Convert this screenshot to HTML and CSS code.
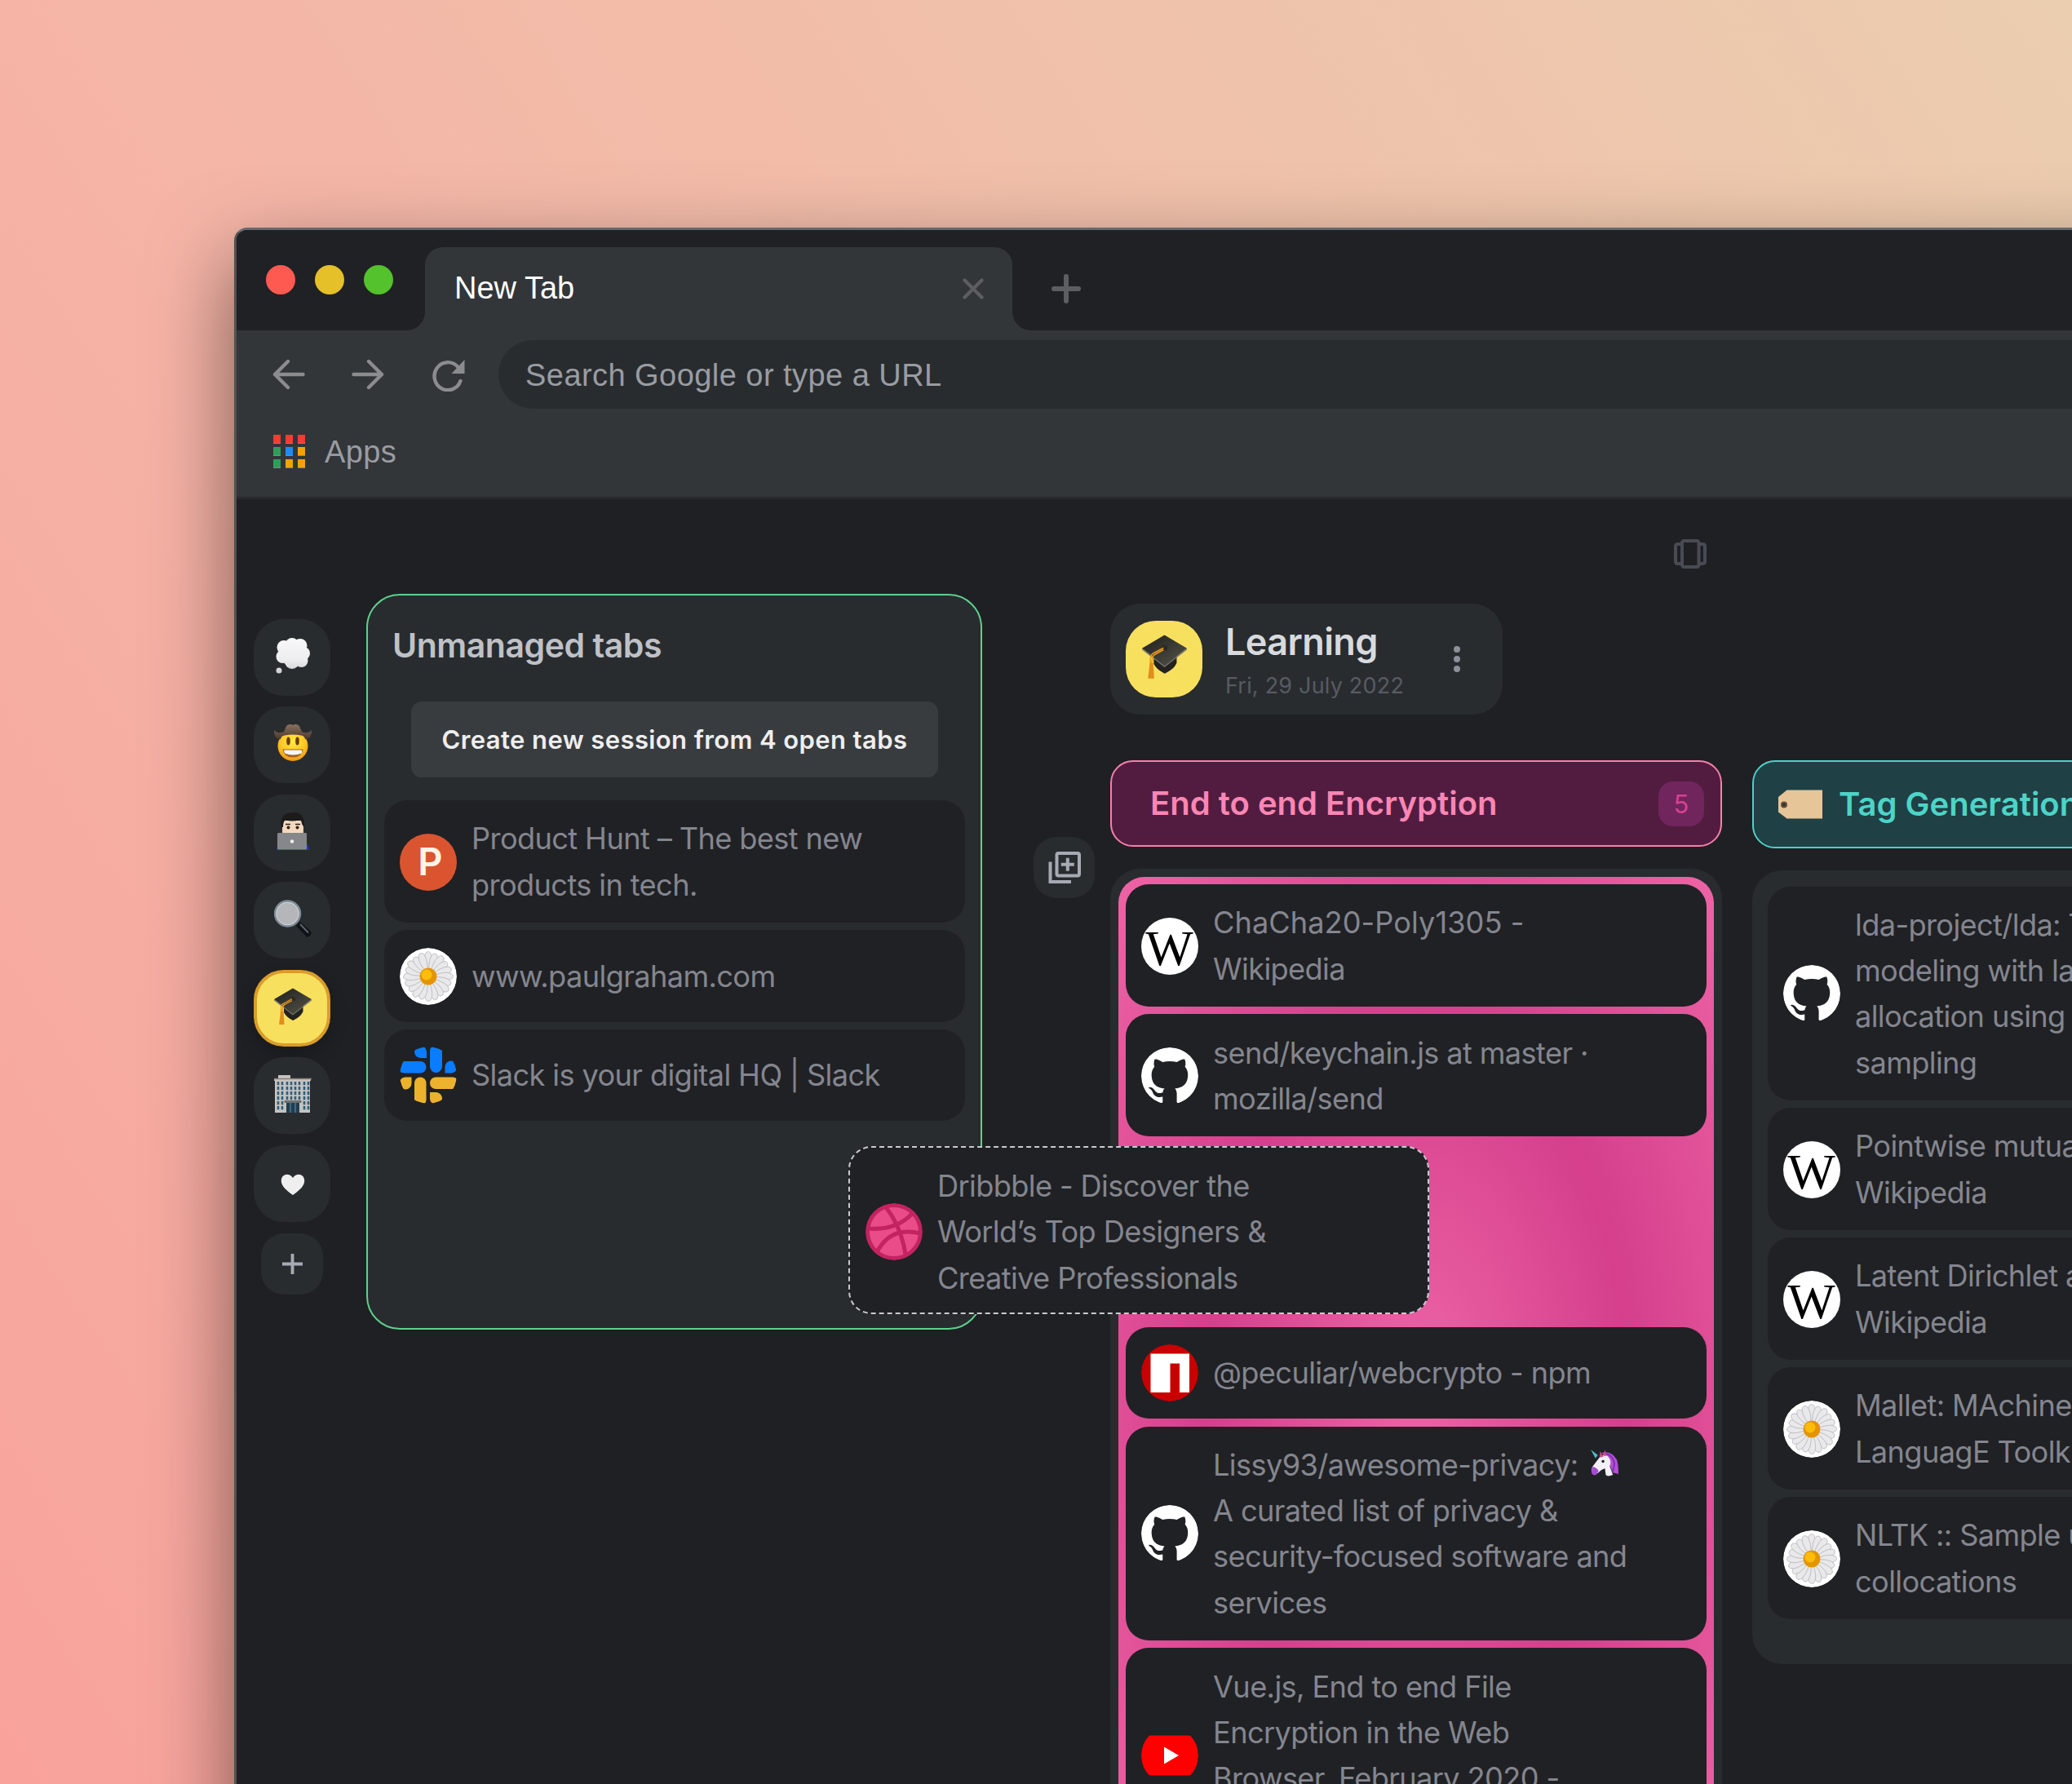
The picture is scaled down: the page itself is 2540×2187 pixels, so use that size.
FILE: index.html
```html
<!DOCTYPE html>
<html lang="en">
<head>
<meta charset="utf-8">
<title>New Tab</title>
<link rel="stylesheet" href="styles.css">
</head>
<body>
<svg class="defs" width="0" height="0" aria-hidden="true">
  <defs>
    <radialGradient id="face" cx=".5" cy=".35" r=".7"><stop offset="0" stop-color="#ffec3f"/><stop offset=".6" stop-color="#fdc524"/><stop offset="1" stop-color="#ee8a12"/></radialGradient>
    <linearGradient id="hat" x1="0" y1="0" x2="0" y2="1"><stop offset="0" stop-color="#8a7160"/><stop offset="1" stop-color="#4a382c"/></linearGradient>
    <linearGradient id="puff" gradientUnits="userSpaceOnUse" x1="0" y1="0" x2="0" y2="46"><stop offset="0" stop-color="#f8f8f9"/><stop offset=".6" stop-color="#eeeef0"/><stop offset="1" stop-color="#c9cbce"/></linearGradient>
    <linearGradient id="board" x1="0" y1="0" x2="1" y2="1"><stop offset="0" stop-color="#1f1f1c"/><stop offset="1" stop-color="#55544b"/></linearGradient>
    <symbol id="cap" viewBox="0 0 46 46">
      <path d="M12 22v8c3 6 8 8 11 10 4-2 10-5 12.500-11v-8z" fill="#23221f"/>
      <path d="M23 .5 46 14 23 32 0 14z" fill="url(#board)"/>
      <path d="M0 14 23 32 46 14v1.500L23 33.500 0 15.500z" fill="#77766c"/>
      <ellipse cx="23" cy="13.500" rx="3.200" ry="2.600" fill="#2a2925"/>
      <path d="M22 13.500 11 19.500Q8 21 8.500 31M22 15.500 13 20.500Q10 22 10 31" fill="none" stroke="#e79a1e" stroke-width="1.400"/>
      <path d="M8 29h3.500l1 16H6z" fill="#e08f1c"/>
    </symbol>
    <symbol id="github" viewBox="0 0.297 24 24">
      <path fill="#fff" d="M12 .297c-6.630 0-12 5.373-12 12 0 5.303 3.438 9.800 8.205 11.385.6.113.82-.258.82-.577 0-.285-.01-1.040-.015-2.040-3.338.724-4.042-1.610-4.042-1.610C4.422 18.070 3.633 17.700 3.633 17.700c-1.087-.744.084-.729.084-.729 1.205.084 1.838 1.236 1.838 1.236 1.070 1.835 2.809 1.305 3.495.998.108-.776.417-1.305.76-1.605-2.665-.3-5.466-1.332-5.466-5.930 0-1.310.465-2.380 1.235-3.220-.135-.303-.54-1.523.105-3.176 0 0 1.005-.322 3.300 1.230.96-.267 1.980-.399 3-.405 1.020.006 2.040.138 3 .405 2.280-1.552 3.285-1.230 3.285-1.230.645 1.653.24 2.873.12 3.176.765.84 1.230 1.910 1.230 3.220 0 4.610-2.805 5.625-5.475 5.920.42.36.81 1.096.81 2.220 0 1.606-.015 2.896-.015 3.286 0 .315.21.69.825.57C20.565 22.092 24 17.592 24 12.297c0-6.627-5.373-12-12-12"/>
    </symbol>
    <symbol id="petals" viewBox="-35 -35 70 70">
      <g id="petal4">
        <path id="petal" d="M-1.500-8C-5-16-6-26-2.500-29.500-1-31 1.500-30.500 3-28.500 5.500-24 4-15 1.500-8z" fill="#e9e9eb" stroke="#adaeb2" stroke-width=".7"/>
        <use href="#petal" transform="rotate(18) scale(.96)"/><use href="#petal" transform="rotate(36)"/><use href="#petal" transform="rotate(54) scale(.95)"/><use href="#petal" transform="rotate(72) scale(.98)"/>
      </g>
      <use href="#petal4" transform="rotate(90)"/><use href="#petal4" transform="rotate(180)"/><use href="#petal4" transform="rotate(270)"/>
    </symbol>
    <symbol id="daisy" viewBox="-35 -35 70 70">
      <circle r="35" fill="#fff"/>
      <use href="#petals" x="-35" y="-35" width="70" height="70"/>
      <circle r="10.500" fill="#e39500"/><circle cx="-2" cy="-2" r="6.500" fill="#fbbd0a"/>
    </symbol>
  </defs>
</svg>

<div class="window">
  <header class="titlebar">
    <div class="lights"><i class="light red"></i><i class="light yellow"></i><i class="light green"></i></div>
    <div class="tab">
      <span>New Tab</span>
      <svg class="close" viewBox="0 0 26 26"><path d="M2.500 2.500l21 21M23.500 2.500l-21 21"/></svg>
    </div>
    <svg class="newtab" viewBox="0 0 36 36"><path d="M18 3v30M3 18h30"/></svg>
  </header>
  <div class="toolbar">
    <svg class="nav" viewBox="0 0 40 40"><path d="M37.500 20H3M19 4 3 20l16 16"/></svg>
    <svg class="nav forward" viewBox="0 0 40 40"><path d="M2.500 20H37M21 4l16 16-16 16"/></svg>
    <svg class="nav reload" viewBox="0 0 40 40"><path d="M34.500 27A16.500 17 0 1 1 31 9.500"/><path class="solid" d="M39.500 1v17H23.500z"/></svg>
    <div class="omnibox">Search Google or type a URL</div>
  </div>
  <div class="bookmarks">
    <div class="apps-grid"><i class="r"></i><i class="r"></i><i class="r"></i><i class="g"></i><i class="b"></i><i class="o"></i><i class="g"></i><i class="o"></i><i class="o"></i></div>
    <span>Apps</span>
  </div>

  <main class="content">
    <nav class="sidebar">
      <div class="space"><svg viewBox="0 0 46 46"><g fill="url(#puff)"><circle cx="23" cy="20" r="16"/><circle cx="12" cy="12.500" r="8.500"/><circle cx="22" cy="9" r="8"/><circle cx="32" cy="10.500" r="8.500"/><circle cx="36" cy="20" r="8"/><circle cx="33.500" cy="29" r="8"/><circle cx="22" cy="30" r="9"/><circle cx="10.500" cy="24" r="8"/><circle cx="6" cy="41" r="3.500"/></g></svg></div>
      <div class="space"><svg viewBox="0 0 46 46"><circle cx="23" cy="26.500" r="18.500" fill="url(#face)"/><path d="M0 7c0 9 4 12 8 11 1-3 2-4 5-4.500q10-2 20 0c3 .5 4 1.500 5 4.500 4 1 8-2 8-11-3 4-8 4-12 2l-3-7q-4-3.500-8-1-4-2.500-8 1l-3 7C8 11 3 11 0 7z" fill="url(#hat)"/><ellipse cx="17.500" cy="20.500" rx="2.300" ry="5" fill="#6b3c06"/><ellipse cx="28.500" cy="20.500" rx="2.300" ry="5" fill="#6b3c06"/><path d="M10.500 30.500h25q-1.500 10-12.500 10t-12.500-10z" fill="#a36612"/><path d="M12 31.500h22v4q-11 4-21 0z" fill="#f3f6fa"/></svg></div>
      <div class="space"><svg viewBox="0 0 46 46"><path d="M3 46q1-11 9-13h22q8 2 9 13z" fill="#2530c9"/><path d="M10 12h26v13H10z" fill="#efcfb2"/><path d="M11 10h24v12q-2 8-12 8t-12-8z" fill="#f3d9bf"/><path d="M9 18C7 3 15 0 24 0c10 0 14 7 12.500 18l-2.500-4q0-4-3-5-9 3-17 0-3 2-3 9z" fill="#1c1a1a"/><circle cx="17.500" cy="18.500" r="2" fill="#3a2413"/><circle cx="28.500" cy="18.500" r="2" fill="#3a2413"/><path d="M14 14.500h6M26 14.500h6" stroke="#2b211b" stroke-width="1.500"/><rect x="4" y="25" width="36" height="20.500" rx="1.500" fill="#86878a"/><circle cx="22" cy="35.500" r="2.200" fill="#eee"/></svg></div>
      <div class="space"><svg viewBox="0 0 46 46"><path d="M27 32l5-5 13.500 12.500q.5 4.500-5 6.500z" fill="#0f1113"/><path d="M32 30l10 10.500" stroke="#5d6770" stroke-width="2"/><circle cx="16.500" cy="17" r="15.500" fill="#b4b6b9" stroke="#7f8d99" stroke-width="2.500"/><circle cx="16.500" cy="17" r="13.700" fill="none" stroke="#d7dbde" stroke-width=".8"/></svg></div>
      <div class="space active"><svg viewBox="0 0 46 46"><use href="#cap"/></svg></div>
      <div class="space"><svg viewBox="0 0 46 46"><path d="M5 0h15v4h25v3h-1v39H1V7H0V4h5z" fill="#c6c3c0"/><path d="M0 4.500h46" stroke="#8d8078" stroke-width="1.500"/><path d="M5 8v35M10 8v35M16 8v24M21 8v24M26 8v24M31 8v24M37 8v35M42 8v35" stroke="#2f5f7c" stroke-width="2.600" stroke-dasharray="4.300 1.700"/><path d="M12.500 31h21v3h-21z" fill="#6f6f70"/><path d="M15 34h16v12H15z" fill="#1d3f55"/><path d="M20 34v12M26 34v12" stroke="#7d8c96"/></svg></div>
      <div class="space heart"><svg viewBox="0 0 46 46"><path d="M23 39C13 32 8.800 27 8.800 21.500 8.800 13 18.500 11 23 18c4.500-7 14.200-5 14.200 3.500C37.200 27 33 32 23 39z" fill="#efefef"/></svg></div>
      <div class="space add"><svg viewBox="0 0 26 26"><path d="M13 0v26M0 13h26" stroke="#a7a9b3" stroke-width="4"/></svg></div>
    </nav>

    <section class="panel">
      <h2>Unmanaged tabs</h2>
      <button class="create">Create new session from 4 open tabs</button>
      <div class="list">
        <article class="card"><span class="icon ph">P</span><p>Product Hunt – The best new<br>products in tech.</p></article>
        <article class="card"><svg class="icon"><use href="#daisy"/></svg><p>www.paulgraham.com</p></article>
        <article class="card"><svg class="icon" viewBox="0 0 70 70"><clipPath id="round"><circle cx="35" cy="35" r="35"/></clipPath><g clip-path="url(#round)"><g fill="#0a7cff"><rect x="37" y="-2" width="15" height="34" rx="7.500"/><path d="M33 14h-8a7.500 7.500 0 1 1 8-8z"/><rect x="-2" y="18" width="34.500" height="14.500" rx="7.250"/><path d="M55.500 32.500V25a7.500 7.500 0 1 1 8 7.500z"/></g><g fill="#ecb22e"><rect x="37" y="37.500" width="35" height="14.500" rx="7.250"/><path d="M14.500 37.500V45a7.500 7.500 0 1 1-8-7.500z"/><rect x="18" y="37.500" width="14.500" height="35" rx="7.250"/><path d="M37 56h8a7.500 7.500 0 1 1-8 8z"/></g></g></svg><p>Slack is your digital HQ | Slack</p></article>
      </div>
    </section>

    <div class="duplicate"><svg viewBox="0 0 40 40"><rect x="10.500" y="2" width="27.500" height="27.500" rx="2"/><path d="M2.500 12.500V37H28M23.800 7.800v16M15.800 15.800h16"/></svg></div>

    <section class="main">
      <svg class="carousel" viewBox="0 0 40 36"><rect x="10" y="2" width="20.500" height="32" rx="2.500"/><path d="M10 6H5q-3 0-3 3v18q0 3 3 3h5M30.500 6h4.500q3 0 3 3v18q0 3-3 3h-4.500"/></svg>
      <div class="session">
        <div class="badge"><svg viewBox="0 0 46 46"><use href="#cap"/></svg></div>
        <div class="meta"><h1>Learning</h1><time>Fri, 29 July 2022</time></div>
        <div class="dots"><i></i><i></i><i></i></div>
      </div>
      <div class="board">
        <section class="column">
          <header class="head pink"><h3>End to end Encryption</h3><span class="count">5</span></header>
          <div class="tray first">
            <div class="drop">
              <article class="card"><span class="icon wiki">W</span><p><span class="wide">ChaCha20-Poly1305 -</span><br>Wikipedia</p></article>
              <article class="card"><svg class="icon"><use href="#github"/></svg><p>send/keychain.js at master ·<br>mozilla/send</p></article>
              <div class="slot"></div>
              <article class="card"><svg class="icon" viewBox="0 0 70 70"><circle cx="35" cy="35" r="35" fill="#c80000"/><path d="M11.500 11.500h47.500v47.500H47V23.500H35.500V59h-24z" fill="#fff"/></svg><p>@peculiar/webcrypto - npm</p></article>
              <article class="card"><svg class="icon"><use href="#github"/></svg><p>Lissy93/awesome-privacy: <svg class="unicorn" viewBox="0 0 36 34"><path d="M14 4q12-3 19 9c2 7 2 13 2 18l-7-2-6-14z" fill="#b44fd6"/><path d="M19 5q9 2 11 13l-2 10" fill="none" stroke="#7d2fb0" stroke-width="2"/><path d="M11 10q4-5 10-2 6 6 3 13l4 11q-7 3-9 0l-1-8q-5 1-9 6l-6 1q-3-3-1-9z" fill="#f2f0f6"/><path d="M2 22q5 0 8 5l-3 5q-5 1-6-3z" fill="#a44bd0"/><path d="M0 0l9 7-3 4z" fill="#4fb8c9"/><path d="M12 2l4 7-5 1zM18 0l2 8-4 0z" fill="#c8507e"/><circle cx="15.500" cy="15" r="1.800" fill="#222"/></svg><br>A curated list of privacy &amp;<br>security-focused software and<br>services</p></article>
              <article class="card"><svg class="icon" viewBox="0 0 70 70"><path d="M12 10.500h46q7 0 9.500 9 5 15.500 0 31-2.500 9-9.500 9H12q-7 0-9.500-9-5-15.500 0-31 2.500-9 9.500-9z" fill="#fe0000"/><path d="M28 24.500v21L46 35z" fill="#fff"/></svg><p>Vue.js, End to end File<br>Encryption in the Web<br>Browser, February 2020 -<br>YouTube</p></article>
            </div>
          </div>
        </section>
        <section class="column">
          <header class="head teal"><svg class="tag" viewBox="0 0 54 36"><path d="M10.500.5H54v35H10.500L0 27.500V9z" fill="#e6c598"/><circle cx="7" cy="18.500" r="3" fill="#1f4044" stroke="#6b4b3a" stroke-width="2"/></svg><h3>Tag Generation</h3></header>
          <div class="tray second">
            <article class="card"><svg class="icon"><use href="#github"/></svg><p>lda-project/lda: Topic<br>modeling with latent Dirichlet<br>allocation using Gibbs<br>sampling</p></article>
            <article class="card"><span class="icon wiki">W</span><p>Pointwise mutual information -<br>Wikipedia</p></article>
            <article class="card"><span class="icon wiki">W</span><p>Latent Dirichlet allocation -<br>Wikipedia</p></article>
            <article class="card"><svg class="icon"><use href="#daisy"/></svg><p>Mallet: MAchine Learning for<br>LanguagE Toolkit</p></article>
            <article class="card"><svg class="icon"><use href="#daisy"/></svg><p>NLTK :: Sample usage for<br>collocations</p></article>
          </div>
        </section>
      </div>
    </section>
  </main>
</div>

<article class="card dragging"><svg class="icon" viewBox="0 0 70 70"><circle cx="35" cy="35" r="32.500" fill="#ea4c89" stroke="#c32361" stroke-width="5"/><path d="M3 31q34 3 54-18M25 5q19 24 24 58M15 58Q32 28 67 37" fill="none" stroke="#c32361" stroke-width="5"/></svg><p>Dribbble - Discover the<br>World’s Top Designers &amp;<br>Creative Professionals</p></article>
</body>
</html>
```

FILE: styles.css
```css
* { box-sizing: border-box; }

html { overflow: hidden; }
body {
  margin: 0;
  padding: 279px 0 0 287px;
  width: 2540px;
  height: 2187px;
  overflow: hidden;
  position: relative;
  background: linear-gradient(56deg, #f8a29b 0%, #f5b4a6 37%, #ebcdaf 100%);
  font-family: Inter, "Liberation Sans", sans-serif;
}

h1, h2, h3, p { margin: 0; }
h1, h2, h3, p, span, time { white-space: nowrap; }
.defs { position: absolute; }

/* The window continues past the right and bottom edges of the page */
.window {
  width: 2420px;
  height: 2080px;
  border: solid #66696d;
  border-width: 3px 0 0 3px;
  border-left-color: #505256;
  border-radius: 16px 0 0 0;
  background: #1f2024;
  overflow: hidden;
  box-shadow: 0 40px 100px rgba(0, 0, 0, .5);
}

/* Browser chrome */
.titlebar {
  display: flex;
  height: 123px;
  background: #202124;
  font-family: "Liberation Sans", Arial, sans-serif;
}
.lights { display: flex; flex: none; gap: 24px; padding: 43px 0 0 36px; width: 231px; }
.light { width: 36px; height: 36px; border-radius: 50%; }
.red { background: #ff5a52; }
.yellow { background: #e6c029; }
.green { background: #53c22c; }
.tab {
  position: relative;
  display: flex;
  flex: none;
  align-items: center;
  justify-content: space-between;
  width: 720px;
  height: 102px;
  margin-top: 21px;
  padding: 0 35px 0 36px;
  border-radius: 22px 22px 0 0;
  background: #323639;
  color: #fff;
  font-size: 38px;
}
.tab span { padding-bottom: 1px; }
.tab::before, .tab::after {
  content: "";
  position: absolute;
  bottom: 0;
  width: 22px;
  height: 22px;
}
.tab::before { left: -22px; background: radial-gradient(circle at 0 0, transparent 21.5px, #323639 22px); }
.tab::after { right: -22px; background: radial-gradient(circle at 100% 0, transparent 21.5px, #323639 22px); }
.close { width: 26px; height: 26px; }
.close path, .newtab path { stroke: #5c5e62; stroke-width: 4.200; stroke-linecap: round; fill: none; }
.newtab { width: 36px; height: 36px; margin: 54px 0 0 48px; }
.newtab path { stroke-width: 6; }

.toolbar {
  display: flex;
  align-items: center;
  height: 108px;
  padding: 0 0 0 44px;
  background: #323639;
}
.nav { flex: none; width: 40px; height: 40px; fill: none; stroke: #8b8c8e; stroke-width: 4.400; stroke-linecap: round; stroke-linejoin: round; }
.nav.forward { margin-left: 57px; }
.nav.reload { margin-left: 59px; margin-top: 2px; }
.nav .solid { fill: #8b8c8e; stroke: none; }
.omnibox {
  flex: 1;
  height: 84px;
  margin-left: 41px;
  padding-left: 33px;
  border-radius: 42px 0 0 42px;
  background: #282c2f;
  color: #9a9ca2;
  font: 38px/87px "Liberation Sans", Arial, sans-serif;
  letter-spacing: .45px;
}
.bookmarks {
  display: flex;
  align-items: center;
  gap: 24px;
  height: 99px;
  padding: 0 0 16px 45px;
  border-bottom: 3px solid #29292b;
  background: #323639;
  color: #9a9ca2;
  font: 38px/80px "Liberation Sans", Arial, sans-serif;
  letter-spacing: .4px;
}
.bookmarks span { padding-top: 2px; }
.apps-grid { display: grid; grid-template-columns: repeat(3, 9px); gap: 4px 6px; }
.apps-grid i { height: 11px; border-bottom: 1px solid #85888a; }
.r { background: #fb3b32; }
.g { background: #2e9e58; }
.b { background: #1f8bf2; }
.o { background: #f2a300; }

/* Page */
.content { display: flex; align-items: flex-start; height: 1575px; }

.sidebar { display: flex; flex: none; flex-direction: column; align-items: center; gap: 13.400px; padding-top: 147px; margin-left: 21px; width: 94px; }
.space {
  display: flex;
  align-items: center;
  justify-content: center;
  width: 94px;
  height: 94px;
  border-radius: 37px;
  background: #282c2f;
}
.space svg { width: 46px; height: 46px; margin: 0 0 4px 2px; }
.space.active { background: #f8e05f; border: 4px solid #d99d2b; box-shadow: 0 10px 20px rgba(0, 0, 0, .22); }
.space.heart { margin-top: 1px; }
.space.add { width: 76px; height: 75px; border-radius: 28px; }
.space.add svg { width: 25px; height: 25px; margin: 0; }

.panel {
  flex: none;
  width: 755px;
  height: 902px;
  margin: 116px 0 0 44px;
  padding: 31px 19px 0 20px;
  border: 2px solid #5fd08c;
  border-radius: 41px;
  background: #282c2f;
}
.panel h2 { padding-left: 10px; color: #bfc1c6; font-size: 41px; line-height: 60px; font-weight: 600; letter-spacing: -.46px; }
.create {
  display: block;
  width: 646px;
  height: 93px;
  margin: 39px 0 0 33px;
  padding: 0;
  border: 0;
  border-radius: 13px;
  background: #383c3f;
  color: #eee;
  font: 600 31px/93px Inter, sans-serif;
  letter-spacing: .4px;
  white-space: nowrap;
}
.list { display: flex; flex-direction: column; gap: 9px; margin-top: 28px; }

.card {
  display: flex;
  align-items: center;
  gap: 18.500px;
  width: 712px;
  min-height: 112.500px;
  padding: 19.250px 18.500px 18.250px;
  border-radius: 28px;
  background: #202124;
  color: #84868f;
  font-size: 36.200px;
  line-height: 56.250px;
  letter-spacing: -.62px;
}
.wide { letter-spacing: .05px; }
.icon { flex: none; width: 70px; height: 70px; border-radius: 50%; overflow: hidden; text-align: center; letter-spacing: 0; }
.ph { background: #da552f; color: #fff4e6; font-size: 47px; font-weight: 600; line-height: 68px; padding-left: 6px; }
.wiki { background: #fff; color: #000; font: 62px/74px "Liberation Serif", serif; }

.duplicate {
  display: flex;
  flex: none;
  align-items: center;
  justify-content: center;
  width: 75px;
  height: 75px;
  margin: 414px 0 0 63px;
  border-radius: 28px;
  background: #282c2f;
}
.duplicate svg { width: 40px; height: 40px; fill: none; stroke: #a7a9b3; stroke-width: 4; }

.main { flex: none; width: 1178px; margin: 49px 0 0 19px; }
.carousel { display: block; width: 40px; height: 36px; margin-left: 691px; fill: none; stroke: #484b53; stroke-width: 4; }
.session {
  display: flex;
  align-items: center;
  width: 481px;
  height: 136px;
  margin-top: 43px;
  padding: 0 52px 0 19px;
  border-radius: 37px;
  background: #282c2f;
}
.badge { display: flex; flex: none; align-items: center; justify-content: center; width: 94px; height: 94px; border-radius: 37px; background: #f8e05f; }
.badge svg { width: 55px; height: 55px; margin-bottom: 6px; }
.meta { flex: 1; margin-left: 28px; padding-top: 6px; }
.meta h1 { color: #d8dade; font-size: 45px; line-height: 60px; font-weight: 600; letter-spacing: -.6px; }
.meta time { display: block; color: #585b62; font-size: 27px; line-height: 48px; letter-spacing: .2px; }
.dots { display: flex; flex-direction: column; gap: 4px; }
.dots i { width: 8px; height: 8px; border-radius: 50%; background: #8d8f99; }

.board { display: flex; gap: 37px; margin-top: 56px; }
.column { width: 750px; flex: none; }
.head {
  display: flex;
  align-items: center;
  height: 106px;
  padding: 0 20px 0 47px;
  border: 2px solid;
  border-radius: 28px;
}
.head h3 { font-size: 40px; line-height: 60px; font-weight: 600; }
.pink { justify-content: space-between; background: #521c40; border-color: #f680ab; color: #fb86b4; }
.count { width: 56px; height: 55px; border-radius: 18px; background: #70255c; color: #d9408f; font-size: 31px; line-height: 55px; text-align: center; }
.teal { height: 108px; padding-left: 30px; background: #1f4044; border-color: #4fd0c5; color: #4dd4c7; }
.tag { flex: none; width: 54px; height: 36px; margin-right: 20px; }

.tray { border-radius: 37px; background: #282c2f; }
.first { margin-top: 27px; padding: 9.500px 10px 0; }
.second { display: flex; flex-direction: column; gap: 9px; margin-top: 27px; height: 973px; padding: 19.500px 19px 0; }
.drop {
  display: flex;
  flex-direction: column;
  gap: 9.400px;
  height: 1241px;
  padding: 9.500px 9px 0;
  border-radius: 32px;
  background: radial-gradient(#ed64a6, #d53f8c, #ed64a6);
}
.slot { height: 214.500px; flex: none; }
.unicorn { width: 35px; height: 33px; margin-left: 6px; vertical-align: -1px; }

.dragging {
  position: absolute;
  left: 1040px;
  top: 1405px;
  padding: 19px 18.500px 14.500px;
  border: 2px dashed #c9cace;
}
```
